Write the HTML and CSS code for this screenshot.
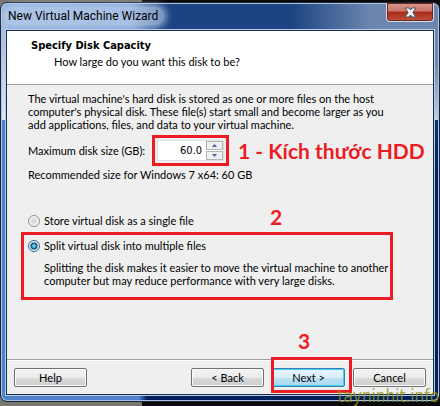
FILE: index.html
```html
<!DOCTYPE html>
<html lang="en">
<head>
  <meta charset="UTF-8">
  <title>New Virtual Machine Wizard</title>
  <link rel="stylesheet" href="styles.css">
</head>
<body>
  <div class="window">
    <div class="title-bar">
      <span class="title">New Virtual Machine Wizard</span>
      <button type="button" class="close" aria-label="Close">
        <svg width="13" height="11" viewBox="0 0 13 11">
          <path d="M1 1h4l1.500 2 1.500-2h4L8.800 5.500 12 10H8L6.500 8 5 10H1l3.200-4.500z" fill="#f4f4f6" stroke="#4d5468" stroke-width="1"/>
        </svg>
      </button>
    </div>

    <form class="client">
      <header class="page-header">
        <h1>Specify Disk Capacity</h1>
        <p>How large do you want this disk to be?</p>
      </header>

      <main class="content">
        <p>The virtual machine's hard disk is stored as one or more files on the host<br>
          computer's physical disk. These file(s) start small and become larger as you<br>
          add applications, files, and data to your virtual machine.</p>

        <div class="size-row">
          <label for="size">Maximum disk size (GB):</label>
          <div class="spinner marked">
            <input type="text" id="size" name="size" value="60.0">
            <div class="arrows">
              <button type="button" aria-label="Increase"><svg width="5" height="3" viewBox="0 0 5 3"><path d="M0 3L2.500 0 5 3z" fill="#4a62a8"/></svg></button>
              <button type="button" aria-label="Decrease"><svg width="5" height="3" viewBox="0 0 5 3"><path d="M0 0h5L2.500 3z" fill="#4a62a8"/></svg></button>
            </div>
          </div>
          <span class="note">1 - Kích thước HDD</span>
        </div>

        <p class="recommended">Recommended size for Windows 7 x64: 60 GB</p>

        <div class="option first">
          <input type="radio" id="single" name="split" value="single">
          <label for="single">Store virtual disk as a single file</label>
        </div>

        <div class="split marked">
          <div class="option">
            <input type="radio" id="multiple" name="split" value="multiple" checked>
            <label for="multiple">Split virtual disk into multiple files</label>
          </div>
          <p class="hint">Splitting the disk makes it easier to move the virtual machine to another<br>
            computer but may reduce performance with very large disks.</p>
          <span class="note above">2</span>
        </div>
      </main>

      <footer class="buttons">
        <button type="button" class="btn help">Help</button>
        <button type="button" class="btn">&lt; Back</button>
        <div class="next marked">
          <button type="submit" class="btn default">Next &gt;</button>
          <span class="note above">3</span>
        </div>
        <button type="button" class="btn">Cancel</button>
      </footer>
    </form>
  </div>
  <div class="watermark">tayninhit.info</div>
</body>
</html>
```
FILE: styles.css
```css
* {
  box-sizing: border-box;
}

body {
  margin: 0;
  padding: 2px 0 4px;
  min-height: 100vh;
  display: flex;
  background: linear-gradient(to right, #77776f 142px, #0a0a0a 142px);
  font-family: Lato, sans-serif;
  font-size: 11px;
  line-height: 13px;
  color: #000;
}

h1, p {
  margin: 0;
  font-size: 11px;
}

h1 {
  font-family: "DejaVu Sans Condensed", sans-serif;
}

.window {
  flex: 1;
  min-width: 0;
  display: flex;
  flex-direction: column;
  padding: 0 5px 6px;
  border: 1px solid #1d2430;
  border-radius: 7px;
  box-shadow: inset 0 0 0 1px #a9c4e8;
  background:
    linear-gradient(to right, #4f82ca 138px, #00205c 146px) bottom / 100% 7px no-repeat,
    linear-gradient(to bottom, #8fb0dc, #dce8f6 117px, #4f82ca 117px) left / 7px 100% no-repeat,
    linear-gradient(to bottom, #6c86b0 60px, #c3cfe0 117px, #0b3272 117px, #00205c 180px) right / 7px 100% no-repeat,
    linear-gradient(to right, #8fb0dc, #86a6d4 130px, #1c4482 160px, #1c4482 290px, #6c86b0 370px);
}

.title-bar {
  display: flex;
  justify-content: space-between;
  align-items: flex-start;
  height: 27px;
}

.title {
  margin-top: 4px;
  padding: 0 6px 0 2px;
  border-radius: 8px;
  background: rgba(190, 208, 236, 0.6);
  box-shadow: 0 0 6px 3px rgba(190, 208, 236, 0.6);
  font-family: Roboto, sans-serif;
  font-size: 12px;
  line-height: 18px;
}

.close {
  display: flex;
  justify-content: center;
  align-items: center;
  width: 48px;
  height: 19px;
  padding: 0;
  border: 1px solid #d9dce4;
  border-top: 0;
  border-radius: 0 0 4px 4px;
  background: linear-gradient(#d9978c, #c9766a 45%, #a82a18 50%, #c4523c);
  box-shadow: inset 0 0 0 1px #6b2820;
}

.client {
  flex: 1;
  display: flex;
  flex-direction: column;
  border: 1px solid #1d2b45;
  outline: 1px solid #b4cdec;
  background: #efefef;
}

.page-header {
  height: 54px;
  padding: 8px 24px;
  border-bottom: 1px solid #a0a0a0;
  background: #fff;
}

.page-header p {
  margin-top: 3px;
  padding-left: 23px;
}

.content {
  flex: 1;
  padding: 7px 21px;
  white-space: nowrap;
}

/* red marker frames and step numbers */
.marked {
  position: relative;
}

.marked::after {
  content: "";
  position: absolute;
  border: 3px solid #ed1c24;
  pointer-events: none;
}

.note {
  color: #ed1c24;
  font-family: Lato, sans-serif;
  font-size: 21px;
  font-weight: bold;
  line-height: 21px;
}

.note.above {
  position: absolute;
}

.size-row {
  display: grid;
  grid-template-columns: 129px 67px 1fr;
  align-items: center;
  margin-top: 9px;
}

.spinner {
  display: flex;
  height: 21px;
  border: 1px solid #dcdfe4;
  background: #fff;
}

.spinner::after {
  inset: -6px;
}

.spinner input {
  width: 48px;
  padding: 0 4px;
  border: 0;
  background: #fff;
  font-family: "DejaVu Sans Condensed", sans-serif;
  font-size: 11px;
  text-align: right;
}

.arrows {
  flex: 1;
  display: flex;
  flex-direction: column;
  gap: 1px;
}

.arrows button {
  flex: 1;
  display: flex;
  justify-content: center;
  align-items: center;
  padding: 0;
  border: 1px solid #b4b4b4;
  background: #efefef;
}

.size-row .note {
  padding-left: 14px;
}

.recommended {
  margin-top: 7px;
}

.option {
  display: flex;
  align-items: center;
  gap: 4px;
}

.option.first {
  margin: 33px 0 12px;
}

.option input {
  appearance: none;
  width: 12px;
  height: 12px;
  margin: 0;
  border: 1px solid #8e8f8f;
  border-radius: 50%;
  background: radial-gradient(#d0d0d0, #f4f4f4 70%);
  box-shadow: inset 0 0 0 1px #f4f4f4;
}

.option input:checked {
  border-color: #3c6a8c;
  background: radial-gradient(#5fd0f4 1px, #0c4470 3px, #b4dcf0 4px);
}

.split::after {
  inset: -7px 19px -13px -7px;
}

.split .above {
  top: -33px;
  left: 242px;
}

.hint {
  margin-top: 9px;
  padding-left: 16px;
}

.buttons {
  display: flex;
  gap: 8px;
  padding: 8px 7px 7px;
  border-top: 1px solid #a0a0a0;
  box-shadow: inset 0 1px 0 #fff;
}

.btn {
  width: 73px;
  height: 19px;
  padding: 0;
  border: 1px solid #707070;
  border-radius: 2px;
  background: linear-gradient(#f3f3f3, #ebebeb 50%, #dadada 50%, #cdcdcd);
  box-shadow: inset 0 0 0 1px #fafafa;
  font: inherit;
  line-height: 15px;
}

.btn.help {
  margin-right: auto;
}

.btn.default {
  border-color: #3c7fb1;
  background: linear-gradient(#eaf5fb, #d9eef9 50%, #bfe3f6 50%, #a9d8f0);
  box-shadow: inset 0 0 0 1px #3fd0f5;
}

.next {
  display: flex;
}

.next::after {
  inset: -11px -7px -6px -1px;
}

.next .above {
  top: -38px;
  left: 26px;
}

.watermark {
  position: absolute;
  right: 1px;
  bottom: 0;
  color: rgba(150, 150, 20, 0.85);
  font-family: "DejaVu Sans Condensed", sans-serif;
  font-size: 17px;
  line-height: 20px;
}
```
